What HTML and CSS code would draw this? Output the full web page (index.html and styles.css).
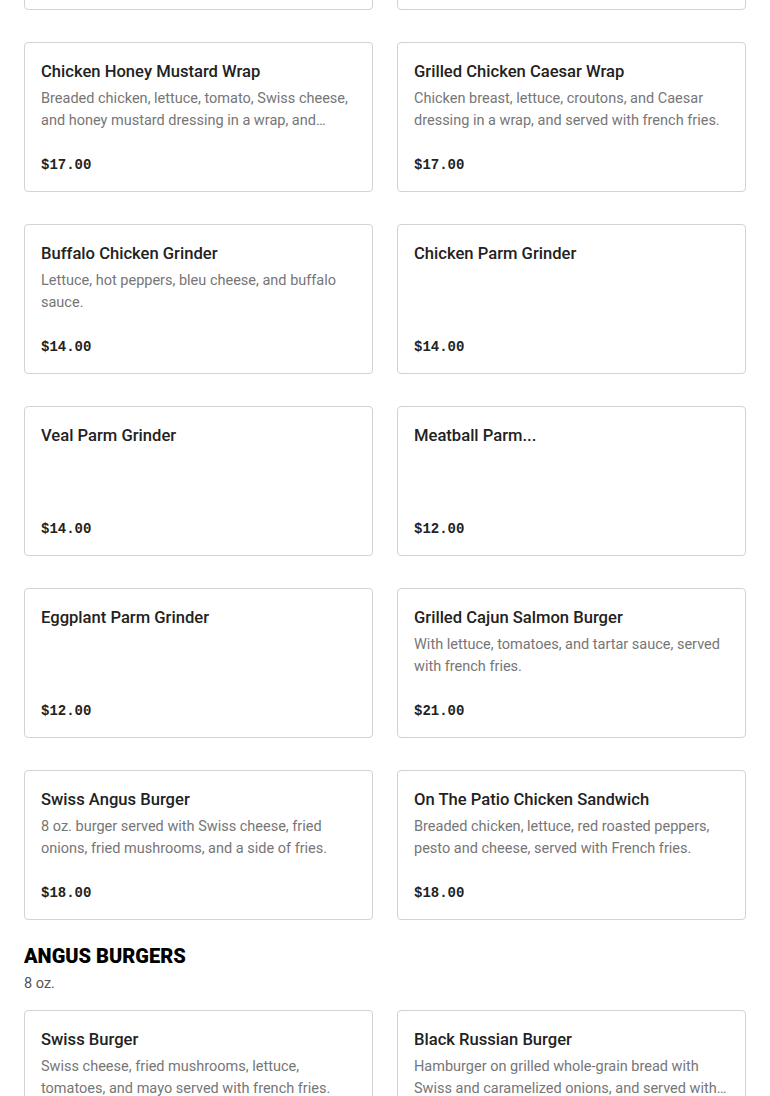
FILE: index.html
```html
<!DOCTYPE html>
<html>
<head>
<meta charset="utf-8">
<link rel="stylesheet" href="styles.css">
</head>
<body>
<main class="menu">
  <section class="section section-first">
    <div class="grid">
      <div class="card"><h3 class="title">&nbsp;</h3><p class="desc"></p><div class="price">&nbsp;</div></div>
      <div class="card"><h3 class="title">&nbsp;</h3><p class="desc"></p><div class="price">&nbsp;</div></div>
      <div class="card"><h3 class="title">Chicken Honey Mustard Wrap</h3><p class="desc">Breaded chicken, lettuce, tomato, Swiss cheese, and honey mustard dressing in a wrap, and served with french fries.</p><div class="price">$17.00</div></div>
      <div class="card"><h3 class="title">Grilled Chicken Caesar Wrap</h3><p class="desc">Chicken breast, lettuce, croutons, and Caesar dressing in a wrap, and served with french fries.</p><div class="price">$17.00</div></div>
      <div class="card"><h3 class="title">Buffalo Chicken Grinder</h3><p class="desc">Lettuce, hot peppers, bleu cheese, and buffalo sauce.</p><div class="price">$14.00</div></div>
      <div class="card"><h3 class="title">Chicken Parm Grinder</h3><p class="desc"></p><div class="price">$14.00</div></div>
      <div class="card"><h3 class="title">Veal Parm Grinder</h3><p class="desc"></p><div class="price">$14.00</div></div>
      <div class="card"><h3 class="title">Meatball Parm...</h3><p class="desc"></p><div class="price">$12.00</div></div>
      <div class="card"><h3 class="title">Eggplant Parm Grinder</h3><p class="desc"></p><div class="price">$12.00</div></div>
      <div class="card"><h3 class="title">Grilled Cajun Salmon Burger</h3><p class="desc">With lettuce, tomatoes, and tartar sauce, served with french fries.</p><div class="price">$21.00</div></div>
      <div class="card"><h3 class="title">Swiss Angus Burger</h3><p class="desc">8 oz. burger served with Swiss cheese, fried onions, fried mushrooms, and a side of fries.</p><div class="price">$18.00</div></div>
      <div class="card"><h3 class="title">On The Patio Chicken Sandwich</h3><p class="desc">Breaded chicken, lettuce, red roasted peppers, pesto and cheese, served with French fries.</p><div class="price">$18.00</div></div>
    </div>
  </section>
  <section class="section">
    <h2 class="section-title">ANGUS BURGERS</h2>
    <p class="section-sub">8 oz.</p>
    <div class="grid">
      <div class="card"><h3 class="title">Swiss Burger</h3><p class="desc">Swiss cheese, fried mushrooms, lettuce, tomatoes, and mayo served with french fries.</p><div class="price">$16.00</div></div>
      <div class="card"><h3 class="title">Black Russian Burger</h3><p class="desc">Hamburger on grilled whole-grain bread with Swiss and caramelized onions, and served with french fries.</p><div class="price">$17.00</div></div>
    </div>
  </section>
</main>
</body>
</html>
```
FILE: styles.css
```css
html, body {
  margin: 0;
  padding: 0;
  background: #fff;
}
body {
  font-family: "Roboto", "Liberation Sans", sans-serif;
  color: #222;
  overflow: hidden;
}
.menu {
  padding: 0 24px;
}
.section-first {
  margin-top: -140px;
}
.section + .section {
  margin-top: 24px;
}
.grid {
  display: grid;
  grid-template-columns: 1fr 1fr;
  column-gap: 24px;
  row-gap: 32px;
}
.card {
  border: 1px solid #d3d3d3;
  border-radius: 4px;
  padding: 17px 16px 15px;
  height: 150px;
  box-sizing: border-box;
  display: flex;
  flex-direction: column;
}
.title {
  margin: 0;
  font-size: 16.6px;
  font-weight: 500;
  line-height: 24px;
  color: #222;
  white-space: nowrap;
  overflow: hidden;
  text-overflow: ellipsis;
  flex-shrink: 0;
}
.desc {
  margin: 4px 0 0;
  font-size: 14.5px;
  line-height: 22px;
  color: #767676;
  height: 44px;
  flex-shrink: 0;
  overflow: hidden;
  display: -webkit-box;
  -webkit-line-clamp: 2;
  -webkit-box-orient: vertical;
}
.price {
  margin-top: 22px;
  font-family: "Liberation Mono", monospace;
  font-size: 14px;
  font-weight: 700;
  line-height: 22px;
  color: #222;
  flex-shrink: 0;
}
.section-title {
  margin: 0;
  font-size: 20px;
  font-weight: 900;
  line-height: 24px;
  color: #000;
}
.section-sub {
  margin: 5px 0 15px;
  font-size: 14.5px;
  line-height: 22px;
  color: #555;
}
```
